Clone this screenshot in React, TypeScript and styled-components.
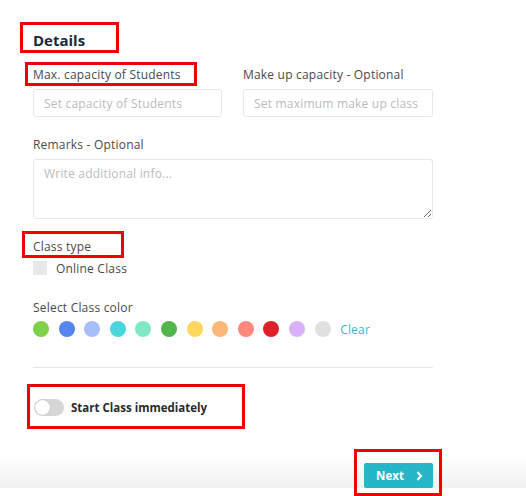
import React from "react";
import styled, { createGlobalStyle } from "styled-components";

const GlobalStyle = createGlobalStyle`
  body {
    margin: 0;
    background: #ffffff;
    font-family: "Open Sans", "Liberation Sans", sans-serif;
  }
`;

const Page = styled.div`
  position: relative;
  width: 526px;
  height: 496px;
  overflow: hidden;
  background: #ffffff;
`;

const Form = styled.div`
  padding: 30px 93px 0 33px;
  display: flex;
  flex-direction: column;
`;

const Heading = styled.h2`
  margin: 0;
  font-size: 15px;
  line-height: 20px;
  font-weight: 700;
  color: #1b2a3b;
`;

const Row = styled.div`
  display: grid;
  grid-template-columns: 189px 190px;
  column-gap: 21px;
  margin-top: 16px;
`;

const Field = styled.div<{ $top?: number }>`
  display: flex;
  flex-direction: column;
  margin-top: ${(p) => p.$top ?? 0}px;
`;

const Label = styled.label<{ $gap?: number }>`
  font-size: 12px;
  letter-spacing: 0.2px;
  line-height: 18px;
  color: #4a4a4a;
  margin-bottom: ${(p) => p.$gap ?? 5}px;
`;

const Input = styled.input`
  box-sizing: border-box;
  height: 28px;
  width: 100%;
  border: 1px solid #e8e8e8;
  border-radius: 3px;
  padding: 0 10px;
  font-family: inherit;
  font-size: 12px;
  letter-spacing: 0.2px;
  color: #333;
  outline: none;
  &::placeholder {
    color: #bcbcbc;
  }
`;

const TextArea = styled.textarea`
  box-sizing: border-box;
  height: 60px;
  width: 100%;
  border: 1px solid #e8e8e8;
  border-radius: 3px;
  padding: 5px 10px;
  font-family: inherit;
  font-size: 12px;
  letter-spacing: 0.2px;
  outline: none;
  resize: vertical;
  &::placeholder {
    color: #bcbcbc;
  }
`;

const CheckRow = styled.div`
  display: flex;
  align-items: center;
  gap: 9px;
  height: 14px;
`;

const Box = styled.span`
  width: 14px;
  height: 14px;
  background: #e8e8e8;
`;

const CheckText = styled.span`
  font-size: 12px;
  letter-spacing: 0.2px;
  color: #4a4a4a;
`;

const Swatches = styled.div`
  display: flex;
  align-items: center;
  gap: 9.6px;
  height: 16px;
`;

const Swatch = styled.span<{ $color: string }>`
  width: 16px;
  height: 16px;
  border-radius: 50%;
  background: ${(p) => p.$color};
`;

const ClearLink = styled.span`
  font-size: 12px;
  letter-spacing: 0.2px;
  color: #3ab5c8;
`;

const Divider = styled.hr`
  margin: 30px 0 0;
  border: none;
  border-top: 1px solid #e6e6e6;
`;

const ToggleRow = styled.div`
  display: flex;
  align-items: center;
  gap: 7px;
  margin-top: 30px;
  height: 18px;
`;

const Track = styled.span`
  position: relative;
  width: 30px;
  height: 17px;
  border-radius: 9px;
  background: #d6d6d6;
  margin-left: 1px;
`;

const Knob = styled.span`
  position: absolute;
  left: 1px;
  top: 1px;
  width: 15px;
  height: 15px;
  border-radius: 50%;
  background: #ffffff;
  box-shadow: 0 0 1px rgba(0, 0, 0, 0.3);
`;

const ToggleText = styled.span`
  font-size: 11.5px;
  font-weight: 700;
  color: #2b2b2b;
`;

const Footer = styled.div`
  margin-top: 39px;
  height: 33px;
  padding: 8px 93px 0 0;
  box-sizing: border-box;
  display: flex;
  justify-content: flex-end;
  align-items: flex-end;
  background: linear-gradient(#ffffff, #f1f1f3);
`;

const NextButton = styled.button`
  width: 69px;
  height: 25px;
  border: none;
  border-radius: 2px;
  background: #25b7c7;
  color: #ffffff;
  font-family: inherit;
  font-size: 11.5px;
  font-weight: 700;
  display: flex;
  align-items: center;
  justify-content: center;
  gap: 12px;
  padding: 0 0 0 2px;
`;

const Mark = styled.div<{ $x: number; $y: number; $w: number; $h: number }>`
  position: absolute;
  box-sizing: border-box;
  left: ${(p) => p.$x}px;
  top: ${(p) => p.$y}px;
  width: ${(p) => p.$w}px;
  height: ${(p) => p.$h}px;
  border: 3px solid #f00000;
  pointer-events: none;
`;

const colors = [
  "#7fd247",
  "#5585ee",
  "#a6bffb",
  "#4ad6dd",
  "#7fe8c4",
  "#50b54b",
  "#fdd75e",
  "#ffb678",
  "#ff877b",
  "#de2128",
  "#dab0fb",
  "#e0e0e0",
];

function App() {
  return (
    <Page>
      <GlobalStyle />
      <Form>
        <Heading>Details</Heading>
        <Row>
          <Field>
            <Label>Max. capacity of Students</Label>
            <Input placeholder="Set capacity of Students" />
          </Field>
          <Field>
            <Label>Make up capacity - Optional</Label>
            <Input placeholder="Set maximum make up class" />
          </Field>
        </Row>
        <Field $top={19}>
          <Label>Remarks - Optional</Label>
          <TextArea placeholder="Write additional info..." />
        </Field>
        <Field $top={19}>
          <Label>Class type</Label>
          <CheckRow>
            <Box />
            <CheckText>Online Class</CheckText>
          </CheckRow>
        </Field>
        <Field $top={24}>
          <Label $gap={4}>Select Class color</Label>
          <Swatches>
            {colors.map((c) => (
              <Swatch key={c} $color={c} />
            ))}
            <ClearLink>Clear</ClearLink>
          </Swatches>
        </Field>
        <Divider />
        <ToggleRow>
          <Track>
            <Knob />
          </Track>
          <ToggleText>Start Class immediately</ToggleText>
        </ToggleRow>
      </Form>
      <Footer>
        <NextButton>
          Next
          <svg width="7" height="10" viewBox="0 0 7 10">
            <path d="M1.5 1 L5 5 L1.5 9" stroke="#fff" strokeWidth="2" fill="none" />
          </svg>
        </NextButton>
      </Footer>

      <Mark $x={20} $y={22} $w={99} $h={31} />
      <Mark $x={25} $y={62} $w={172} $h={24} />
      <Mark $x={22} $y={231} $w={102} $h={27} />
      <Mark $x={27} $y={384} $w={218} $h={45} />
      <Mark $x={354} $y={449} $w={88} $h={47} />
    </Page>
  );
}

export default App;
